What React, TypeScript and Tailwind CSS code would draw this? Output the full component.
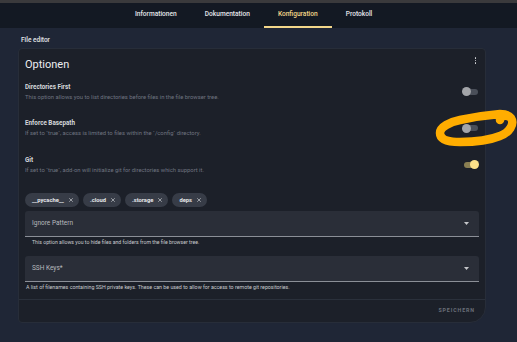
import { X } from 'lucide-react';

const tabs = ['Informationen', 'Dokumentation', 'Konfiguration', 'Protokoll'];

const options = [
  {
    title: 'Directories First',
    desc: 'This option allows you to list directories before files in the file browser tree.',
    on: false,
  },
  {
    title: 'Enforce Basepath',
    desc: 'If set to `true`, access is limited to files within the `/config` directory.',
    on: false,
  },
  {
    title: 'Git',
    desc: 'If set to `true`, add-on will initialize git for directories which support it.',
    on: true,
  },
];

const chips = ['__pycache__', '.cloud', '.storage', 'deps'];

function Toggle({ on }: { on: boolean }) {
  return (
    <div className="relative h-[9px] w-[17px]">
      <div
        className={`absolute left-[2px] top-[1.5px] h-[6px] w-[14px] rounded-full ${
          on ? 'bg-[#8a7f52]' : 'bg-[#4a4f59]'
        }`}
      />
      <div
        className={`absolute top-0 h-[9px] w-[9px] rounded-full ${
          on ? 'left-[8px] bg-[#fbe08a]' : 'left-0 bg-[#a3a5a9]'
        }`}
      />
    </div>
  );
}

function SelectField({ label }: { label: string }) {
  return (
    <div className="flex h-[26px] items-center justify-between rounded-t-[3px] border-b border-[#8b8f97] bg-[#2a2e38] pl-[7px] pr-[10px]">
      <span className="text-[6.5px] text-[#b7b9bd]">{label}</span>
      <svg width="5" height="3" viewBox="0 0 5 3">
        <path d="M0 0 L5 0 L2.5 3 Z" fill="#c4c6ca" />
      </svg>
    </div>
  );
}

export default function App() {
  return (
    <div
      className="relative h-[342px] w-[517px] overflow-hidden bg-[#1f2636]"
      style={{ fontFamily: 'Roboto, "Liberation Sans", sans-serif' }}
    >
      <div className="h-[3px] bg-[#3a3a3c]" />
      <div className="flex h-[25px] bg-[#131923] pl-[121px]">
        {tabs.map(t => (
          <div
            key={t}
            className={`flex items-center border-b-2 px-[14px] text-[6.6px] font-medium ${
              t === 'Konfiguration'
                ? 'border-[#f2d68a] text-[#f2d68a]'
                : 'border-transparent text-[#e4e6ea]'
            }`}
          >
            {t}
          </div>
        ))}
      </div>

      <div className="px-[18px] pt-[8px]">
        <div className="pl-[3px] text-[6.5px] font-medium leading-[8px] text-[#e4e6ea]">
          File editor
        </div>

        <div className="mt-[4px] w-[468px] rounded-[4px] rounded-br-[16px] border border-[#272d39] bg-[#1c2029]">
          <div className="relative px-[6px] pt-[9px]">
            <div className="text-[11px] leading-[13px] text-[#eceef1]">Optionen</div>
            <div className="absolute right-[9px] top-[8px] flex flex-col gap-[1px]">
              <span className="h-[1.5px] w-[1.5px] rounded-full bg-[#d8dade]" />
              <span className="h-[1.5px] w-[1.5px] rounded-full bg-[#d8dade]" />
              <span className="h-[1.5px] w-[1.5px] rounded-full bg-[#d8dade]" />
            </div>
          </div>

          <div className="mt-[11.7px] flex flex-col gap-[18.6px] pl-[6px] pr-[6px]">
            {options.map(o => (
              <div key={o.title} className="flex items-center justify-between">
                <div>
                  <div className="text-[6.3px] font-bold leading-[8px] text-[#d6d8dc]">{o.title}</div>
                  <div className="mt-[2px] text-[5.85px] leading-[8px] text-[#6f7480]">{o.desc}</div>
                </div>
                <Toggle on={o.on} />
              </div>
            ))}
          </div>

          <div className="mt-[19px] flex gap-[4px] pl-[6px]">
            {chips.map(c => (
              <div
                key={c}
                className="flex h-[14px] items-center gap-[4px] rounded-full bg-[#373c47] pl-[7px] pr-[5px] text-[5.8px] font-bold text-[#e4e6ea]"
              >
                {c}
                <X size={6} strokeWidth={2.5} className="text-[#d6d8dc]" />
              </div>
            ))}
          </div>

          <div className="mt-[4px] pl-[6px] pr-[6px]">
            <SelectField label="Ignore Pattern" />
            <div className="mt-[2px] pl-[7px] text-[5.2px] leading-[6px] text-[#c9cbcf]">
              This option allows you to hide files and folders from the file browser tree.
            </div>
            <div className="mt-[11px]">
              <SelectField label="SSH Keys*" />
            </div>
            <div className="mt-[2px] pl-[1px] text-[5.3px] leading-[6px] text-[#c9cbcf]">
              A list of filenames containing SSH private keys. These can be used to allow for access to remote git repositories.
            </div>
          </div>

          <div className="mt-[9px] flex h-[23px] items-center justify-end border-t border-[#2a303b] pr-[10px]">
            <span className="text-[5.3px] font-bold tracking-[0.9px] text-[#6b707a]">SPEICHERN</span>
          </div>
        </div>
      </div>

      <svg className="absolute left-0 top-0" width="517" height="342" viewBox="0 0 517 342" fill="none">
        <path
          d="M500 120 C 500 116, 506 114, 511 118 C 515 124, 509 133, 500 136 C 490 140, 476 142, 460 142 C 449 142, 440 140, 440 133 C 440 127, 450 122, 460 120 C 474 117, 488 115, 500 114 C 505 114, 509 115, 511 118"
          stroke="#ffad00"
          strokeWidth="8.5"
          strokeLinecap="round"
          strokeLinejoin="round"
        />
      </svg>
    </div>
  );
}
